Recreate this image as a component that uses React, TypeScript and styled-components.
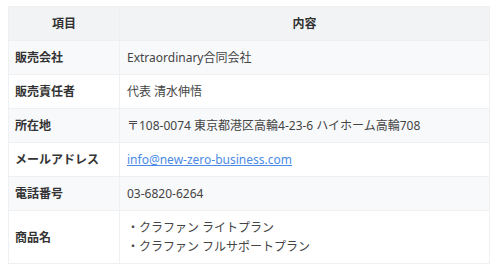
import React from "react";
import styled, { createGlobalStyle } from "styled-components";

const GlobalStyle = createGlobalStyle`
  body {
    margin: 0;
    background: #fff;
    font-family: "Noto Sans", "Noto Sans CJK JP", sans-serif;
    color: #444;
  }
`;

const rows: { label: string; value: React.ReactNode }[] = [
  { label: "販売会社", value: "Extraordinary合同会社" },
  { label: "販売責任者", value: "代表 清水伸悟" },
  { label: "所在地", value: "〒108-0074 東京都港区高輪4-23-6 ハイホーム高輪708" },
  {
    label: "メールアドレス",
    value: <MailLink href="#">info@new-zero-business.com</MailLink>,
  },
  { label: "電話番号", value: "03-6820-6264" },
  {
    label: "商品名",
    value: (
      <>
        ・クラファン ライトプラン
        <br />
        ・クラファン フルサポートプラン
      </>
    ),
  },
];

function MailLink(props: React.AnchorHTMLAttributes<HTMLAnchorElement>) {
  return <Link {...props} />;
}

export default function App() {
  return (
    <>
      <GlobalStyle />
      <Wrapper>
        <Table>
          <colgroup>
            <col style={{ width: 111 }} />
            <col />
          </colgroup>
          <thead>
            <tr>
              <Th>項目</Th>
              <Th>内容</Th>
            </tr>
          </thead>
          <tbody>
            {rows.map((r, i) => (
              <Row key={r.label} $striped={i % 2 === 0}>
                <Label>{r.label}</Label>
                <Value>{r.value}</Value>
              </Row>
            ))}
          </tbody>
        </Table>
      </Wrapper>
    </>
  );
}

const Wrapper = styled.div`
  padding: 6px 10px 0 8px;
`;

const Table = styled.table`
  width: 482px;
  border-collapse: collapse;
  table-layout: fixed;
  font-size: 12px;
  line-height: 19px;
`;

const Th = styled.th`
  background: #f2f3f5;
  border: 1px solid #eef0f2;
  padding: 7px;
  font-weight: 700;
  color: #333;
  text-align: center;
`;

const Row = styled.tr<{ $striped: boolean }>`
  background: ${(p) => (p.$striped ? "#f8f9fb" : "#fff")};
`;

const Label = styled.td`
  border: 1px solid #eef0f2;
  padding: 7px 6px;
  font-weight: 700;
  color: #333;
`;

const Value = styled.td`
  border: 1px solid #eef0f2;
  padding: 7px;
  color: #444;
`;

const Link = styled.a`
  color: #4a8ae6;
  text-decoration: underline;
`;
